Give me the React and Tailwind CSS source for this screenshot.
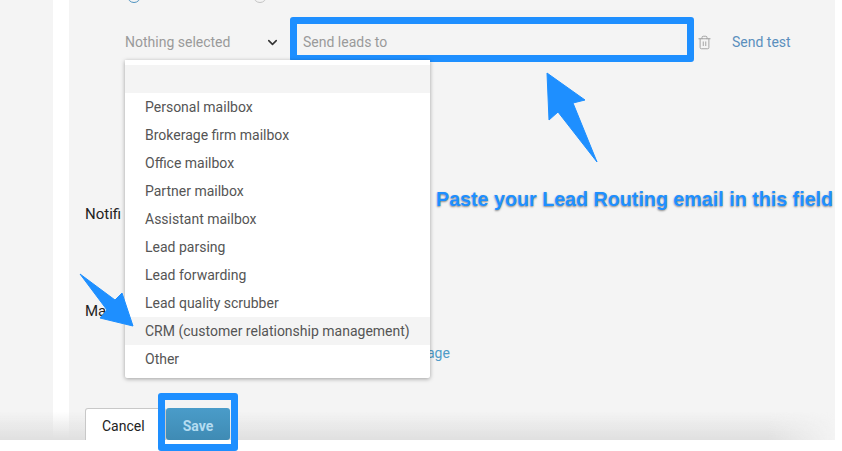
import React from 'react';
import { ChevronDown, Trash2 } from 'lucide-react';

const menuItems = [
  'Personal mailbox',
  'Brokerage firm mailbox',
  'Office mailbox',
  'Partner mailbox',
  'Assistant mailbox',
  'Lead parsing',
  'Lead forwarding',
  'Lead quality scrubber',
  'CRM (customer relationship management)',
  'Other',
];

const App = () => {
  return (
    <div className="relative h-[451px] w-[842px] overflow-hidden bg-white font-['Roboto',sans-serif]">
      <div className="flex h-[440px]">
        <div className="w-[53px] bg-[#f4f4f4]"></div>
        <div className="w-[16px] bg-white"></div>

        {/* Form panel */}
        <div className="relative flex-1 bg-[#f4f4f4] pl-[16px]">
          {/* Radios, cut off by the top edge */}
          <div className="mt-[-11px] flex h-[14px] pl-[42px]">
            <div className="h-[14px] w-[14px] rounded-full border border-[#4f93c0]"></div>
            <div className="ml-[112px] h-[14px] w-[14px] rounded-full border border-[#c4c4c4]"></div>
          </div>

          {/* Lead destination row */}
          <div className="mt-[14px] flex h-[45px] items-center pl-[40px]">
            <div className="flex w-[165px] items-center justify-between pr-[10px] pt-[6px]">
              <span className="text-[14px] text-[#9a9a9a]">Nothing selected</span>
              <ChevronDown size={15} strokeWidth={2.5} className="text-[#333333]" />
            </div>
            <div className="flex h-[45px] w-[404px] items-center rounded-[3px] border-[7px] border-[#1e8fff] pl-[6px] pt-[6px]">
              <span className="text-[14px] text-[#9a9a9a]">Send leads to</span>
            </div>
            <Trash2 size={15} strokeWidth={1.4} className="ml-[3px] mt-[5px] text-[#9a9a9a]" />
            <span className="ml-[20px] mt-[6px] text-[14px] text-[#5b8fbd]">Send test</span>
          </div>

          <div className="mt-[142px] text-[15px] leading-[20px] text-[#222222]">Notifi</div>
          <div className="mt-[77px] text-[15px] leading-[20px] text-[#222222]">Ma</div>
          <div className="mt-[22px] pl-[342px] text-[14px] leading-[20px] text-[#4f9bc8]">age</div>

          {/* Footer buttons */}
          <div className="relative z-20 mt-[45px] flex h-[32px]">
            <div className="flex h-[32px] w-[81px] items-center rounded-t-[3px] border border-b-0 border-[#c8c8c8] bg-white pl-[16px] pt-[4px] text-[14px] text-[#222222]">
              Cancel
            </div>
            <div className="flex h-[32px] w-[64px] items-center justify-center rounded-[3px] bg-gradient-to-b from-[#4a9cc9] to-[#3f8bb4] pt-[4px] text-[14px] font-bold text-[#b4dcf1]">
              Save
            </div>
          </div>
        </div>

        <div className="w-[7px] bg-white"></div>
      </div>

      {/* Shadow above the white footer */}
      <div className="absolute left-0 top-[412px] z-10 h-[28px] w-[835px] bg-gradient-to-b from-transparent to-[#dfdfdf] [mask-image:linear-gradient(to_right,black_92%,transparent)]"></div>

      {/* Open dropdown menu */}
      <div className="absolute left-[125px] top-[60px] z-30 h-[318px] w-[305px] rounded-b-[2px] bg-white pt-[5px] shadow-[0_1px_4px_rgba(0,0,0,0.35)]">
        <div className="h-[28px] bg-[#f4f4f4]"></div>
        {menuItems.map((item) => (
          <div
            key={item}
            className={`flex h-[28px] items-center pl-[20px] text-[14px] text-[#555555] ${item.startsWith('CRM') ? 'bg-[#f4f4f4]' : ''}`}
          >
            {item}
          </div>
        ))}
      </div>

      {/* Annotations */}
      <svg className="absolute left-0 top-0 z-40" width="842" height="451" viewBox="0 0 842 451" fill="#1e8fff">
        <polygon
          points="547,73 585,100 573,103 597,162 558,112 549,120"
          stroke="#1e8fff"
          strokeWidth="1"
          strokeLinejoin="round"
        />
        <polygon
          points="80,274 115,300 122,293 133,326 100,318 107,310"
          stroke="#1e8fff"
          strokeWidth="1"
          strokeLinejoin="round"
        />
      </svg>
      <div className="absolute left-[436px] top-[187px] z-40 whitespace-nowrap font-['Liberation_Sans',sans-serif] text-[19.7px] font-bold leading-[24px] text-[#1e8fff] [text-shadow:0_1px_2px_rgba(0,0,0,0.45)]">
        Paste your Lead Routing email in this field
      </div>
      <div className="absolute left-[158px] top-[393px] z-40 h-[58px] w-[80px] rounded-[3px] border-[7px] border-[#1e8fff]"></div>
    </div>
  );
};

export default App;
